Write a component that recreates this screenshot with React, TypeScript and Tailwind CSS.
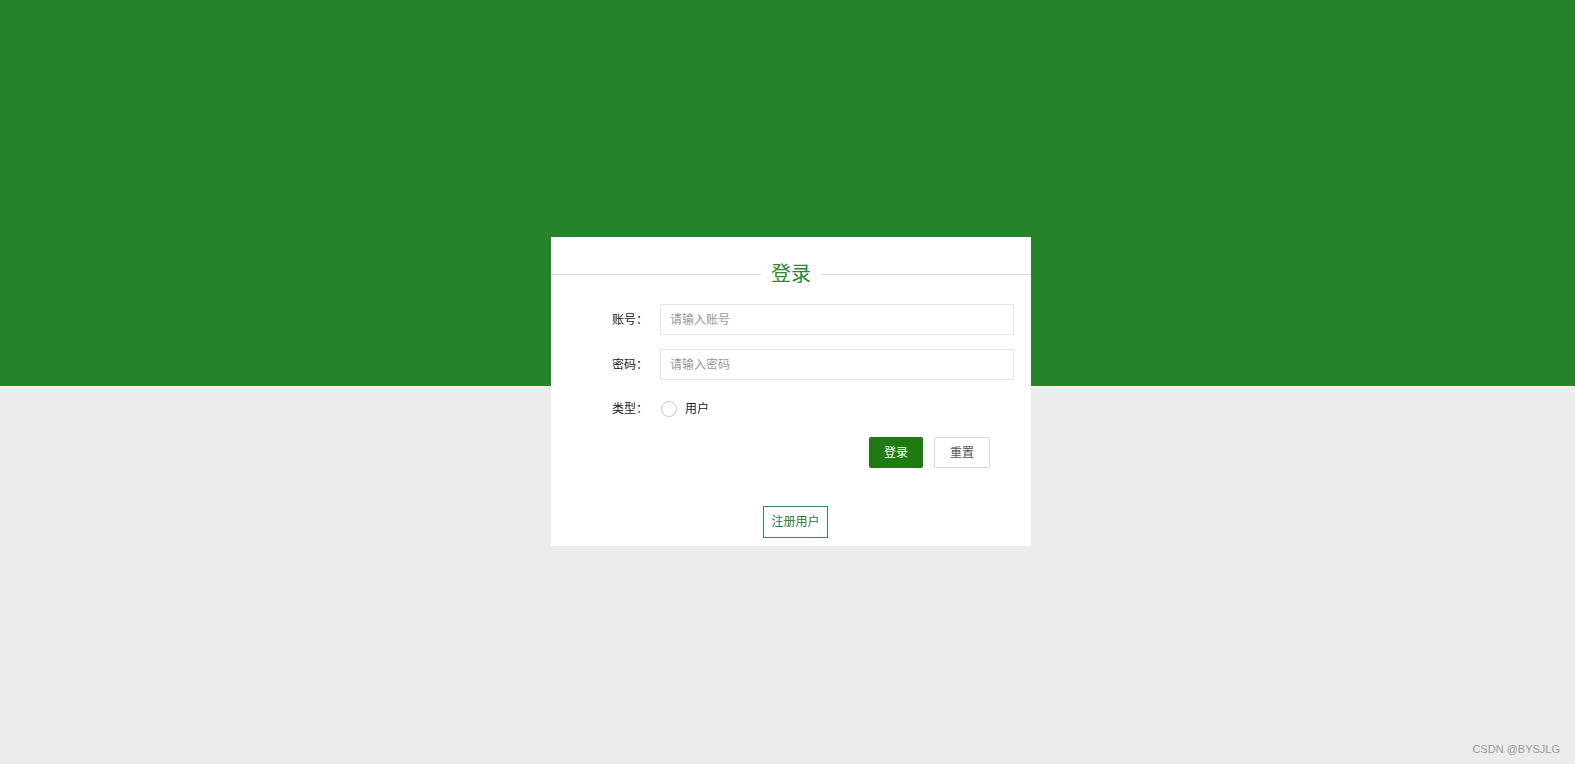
import { useState } from "react";

export default function App() {
  const [account, setAccount] = useState("");
  const [password, setPassword] = useState("");
  const [role, setRole] = useState("");

  return (
    <div
      className="relative min-h-[764px] w-full overflow-hidden bg-[linear-gradient(to_bottom,#25842a_0,#25842a_386px,#f4f4f4_386px,#f4f4f4_387px,#ececec_387px)] pt-[237px] pl-[7px] text-[12px] text-[#222]"
      style={{ fontFamily: '"Liberation Sans", "Noto Sans CJK SC", sans-serif' }}
    >
      <div className="mx-auto w-[480px] bg-white pt-[26px] pb-[8px]">
        {/* title with side rules */}
        <div className="flex h-[22px] items-center">
          <div className="h-px flex-1 bg-[#dcdcdc]" />
          <h2 className="px-[10px] text-[20px] leading-[22px] text-[#2b8a2e]">登录</h2>
          <div className="h-px flex-1 bg-[#dcdcdc]" />
        </div>

        <div className="mt-[19px] flex h-[31px] items-center">
          <label className="w-[97px] text-right">账号：</label>
          <input
            value={account}
            onChange={(e) => setAccount(e.target.value)}
            placeholder="请输入账号"
            className="ml-[12px] h-[31px] w-[354px] border border-[#e6e6e6] px-[9px] text-[12px] outline-none placeholder:text-[#999]"
          />
        </div>

        <div className="mt-[14px] flex h-[31px] items-center">
          <label className="w-[97px] text-right">密码：</label>
          <input
            type="password"
            value={password}
            onChange={(e) => setPassword(e.target.value)}
            placeholder="请输入密码"
            className="ml-[12px] h-[31px] w-[354px] border border-[#e6e6e6] px-[9px] text-[12px] outline-none placeholder:text-[#999]"
          />
        </div>

        <div className="mt-[16px] flex h-[26px] items-center">
          <label className="w-[97px] text-right">类型：</label>
          <button
            type="button"
            onClick={() => setRole("user")}
            className="ml-[13px] flex cursor-pointer items-center gap-[8px] border-none bg-transparent p-0"
          >
            <span className="flex h-[16px] w-[16px] items-center justify-center rounded-full border border-[#c9c9c9]">
              {role === "user" && <span className="h-[8px] w-[8px] rounded-full bg-[#25842a]" />}
            </span>
            <span className="text-[12px] text-[#222]">用户</span>
          </button>
        </div>

        <div className="mt-[15px] flex justify-end gap-[11px] pr-[41px]">
          <button className="h-[31px] w-[54px] rounded-[2px] bg-[#1f7a12] text-[12px] text-white">登录</button>
          <button
            onClick={() => {
              setAccount("");
              setPassword("");
              setRole("");
            }}
            className="h-[31px] w-[56px] rounded-[2px] border border-[#d9d9d9] bg-white text-[12px] text-[#555]"
          >
            重置
          </button>
        </div>

        <div className="mt-[38px] flex justify-center pl-[9px]">
          <button className="h-[32px] w-[65px] border border-[#3b8b4b] bg-white text-[12px] text-[#2a7a3a]">注册用户</button>
        </div>
      </div>

      <span className="absolute right-[15px] bottom-[7px] text-[11px] text-[#999]">CSDN @BYSJLG</span>
    </div>
  );
}
